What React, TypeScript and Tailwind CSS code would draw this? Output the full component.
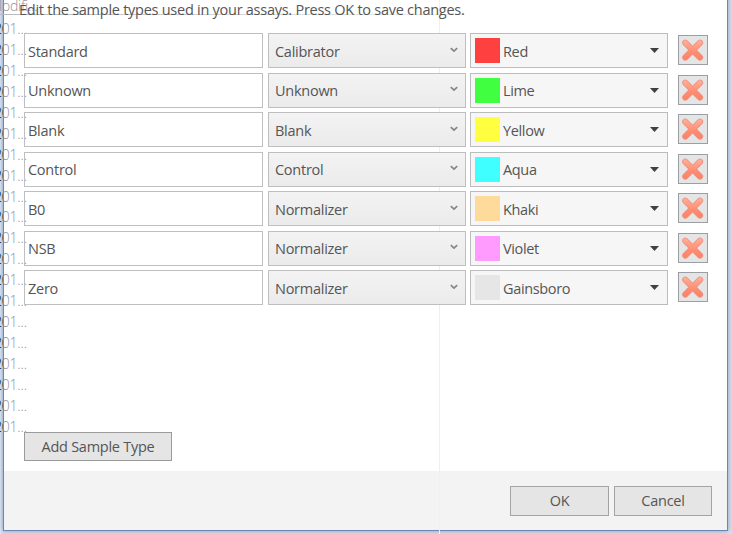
const rows = [
  { name: 'Standard', kind: 'Calibrator', color: 'Red', swatch: 'bg-[#ff4040]' },
  { name: 'Unknown', kind: 'Unknown', color: 'Lime', swatch: 'bg-[#40ff40]' },
  { name: 'Blank', kind: 'Blank', color: 'Yellow', swatch: 'bg-[#ffff40]' },
  { name: 'Control', kind: 'Control', color: 'Aqua', swatch: 'bg-[#40ffff]' },
  { name: 'B0', kind: 'Normalizer', color: 'Khaki', swatch: 'bg-[#ffdb9b]' },
  { name: 'NSB', kind: 'Normalizer', color: 'Violet', swatch: 'bg-[#ff9bff]' },
  { name: 'Zero', kind: 'Normalizer', color: 'Gainsboro', swatch: 'bg-[#e6e6e6]' },
];

function DeleteIcon() {
  return (
    <svg width="24" height="24" viewBox="0 0 24 24" fill="none" strokeLinecap="round">
      <defs>
        <linearGradient id="cross" x1="0" y1="0" x2="0" y2="24" gradientUnits="userSpaceOnUse">
          <stop offset="0" stopColor="#ffb7a0" />
          <stop offset="0.6" stopColor="#ff8c70" />
          <stop offset="1" stopColor="#fb7f60" />
        </linearGradient>
      </defs>
      <path d="M4.3 4.7 19 19.5M19 4.7 4.3 19.5" stroke="#ec9082" strokeWidth="6.2" />
      <path d="M4.3 4.7 19 19.5M19 4.7 4.3 19.5" stroke="url(#cross)" strokeWidth="4.5" />
    </svg>
  );
}

function Row({ row }: { row: (typeof rows)[number] }) {
  return (
    <div className="flex h-[39.5px] items-start">
      <div className="flex h-[35px] w-[239px] items-center border border-[#bfbfc1] pl-[3px] pt-[2px]">{row.name}</div>
      <div className="ml-[5px] flex h-[35px] w-[198px] items-center justify-between border border-[#bfbfc1] bg-linear-to-b from-[#f3f3f3] to-[#ebebeb] pl-[6px] pr-[7px]">
        <span className="pt-[2px]">{row.kind}</span>
        <svg className="-mt-[2px]" width="8" height="6" viewBox="0 0 8 6" fill="none">
          <path d="M.8 1.2 4 4.2 7.2 1.2" stroke="#858585" strokeWidth="1.7" />
        </svg>
      </div>
      <div className="ml-1 flex h-[35px] w-[198px] items-center border border-[#bcbcbf] bg-[#f6f6f6] pl-1 pr-2">
        <span className={`h-[25px] w-[25px] ${row.swatch}`} />
        <span className="ml-[3px] flex-1 pt-[2px] tracking-[-0.35px]">{row.color}</span>
        <svg width="9" height="5" viewBox="0 0 9 5">
          <path d="M0 0h9L4.5 5z" fill="#404040" />
        </svg>
      </div>
      <button className="ml-[10px] mt-[2px] flex h-[30px] w-[30px] items-center justify-center border border-[#9b9ea2] bg-[#e5e5e6]">
        <DeleteIcon />
      </button>
    </div>
  );
}

export default function App() {
  return (
    <div className="relative h-[534px] w-[732px] overflow-hidden bg-[#d9dfec] font-['Open_Sans','Noto_Sans',sans-serif] text-[14.5px] leading-5 tracking-[-0.26px] text-[#555]">
      <div className="absolute inset-y-0 left-0 w-1 bg-linear-to-r from-[#e2eaf6] to-[#c6d5ed]" />
      <div className="absolute left-[3px] -top-2 flex h-[539px] w-[725px] flex-col border border-[#6f86b5] bg-white shadow-[0_0_5px_#8b9bb5]">
        <div className="flex-1" />
        <div className="h-[59px] bg-[#f3f3f3]" />
      </div>

      <div className="absolute left-0 top-0 h-[534px] w-[470px] overflow-hidden text-[14px] font-light tracking-[-0.2px] text-[#8f8f9a]">
        <div className="absolute -left-[1px] -top-1">lodifi...</div>
        <div className="absolute left-0 top-[14px] h-px w-[465px] bg-linear-to-r from-[#b9b9bd] via-[#d6d6d8] to-[#ededed]" />
        <div className="absolute left-[439px] top-0 h-[534px] w-px bg-[#efeff0]" />
        <div className="absolute -left-[6px] top-[19px]">
          {Array.from({ length: 20 }, (_, i) => (
            <div key={i} className="h-[20.95px]">201...</div>
          ))}
        </div>
        <div className="absolute left-0 top-0 h-[534px] w-[3px] overflow-hidden text-[#111827]">
          <div className="absolute -left-[6px] top-[19px]">
            {Array.from({ length: 20 }, (_, i) => (
              <div key={i} className="h-[20.95px]">201...</div>
            ))}
          </div>
        </div>
      </div>

      <main className="relative flex h-[530px] flex-col pl-6">
        <p className="-ml-[5px] h-[33px] whitespace-nowrap">Edit the sample types used in your assays. Press OK to save changes.</p>
        <div className="h-[399px]">
          {rows.map((r) => (
            <Row key={r.name} row={r} />
          ))}
        </div>
        <button className="h-[29px] w-[148px] shrink-0 border border-[#9b9b9b] bg-[#e5e5e5]">Add Sample Type</button>
        <footer className="mt-[25px] flex justify-end gap-[5px] pr-5">
          <button className="h-[30px] w-[99px] border border-[#a3a3a3] bg-[#e5e5e5]">OK</button>
          <button className="h-[30px] w-[98px] border border-[#a3a3a3] bg-[#e5e5e5]">Cancel</button>
        </footer>
      </main>
    </div>
  );
}
